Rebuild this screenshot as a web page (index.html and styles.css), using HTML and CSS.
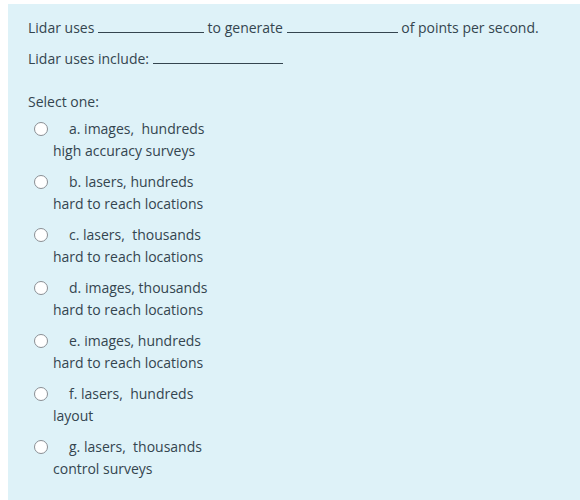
FILE: index.html
```html
<!DOCTYPE html>
<html>
<head>
<meta charset="utf-8">
<link rel="stylesheet" href="styles.css">
</head>
<body>
<div class="formulation">
  <p class="qtext">Lidar uses <span class="blank b1"></span> to generate <span class="blank b2"></span> of points per second.</p>
  <p class="qtext">Lidar uses include: <span class="blank b3"></span></p>
  <div class="ablock">
    <div class="prompt">Select one:</div>
    <div class="answer">
      <div class="opt"><div class="l1"><span class="radio"></span><span class="lbl">a. images,&nbsp; hundreds</span></div><div class="l2">high accuracy surveys</div></div>
      <div class="opt"><div class="l1"><span class="radio"></span><span class="lbl">b. lasers, hundreds</span></div><div class="l2">hard to reach locations</div></div>
      <div class="opt"><div class="l1"><span class="radio"></span><span class="lbl">c. lasers,&nbsp; thousands</span></div><div class="l2">hard to reach locations</div></div>
      <div class="opt"><div class="l1"><span class="radio"></span><span class="lbl">d. images, thousands</span></div><div class="l2">hard to reach locations</div></div>
      <div class="opt"><div class="l1"><span class="radio"></span><span class="lbl">e. images, hundreds</span></div><div class="l2">hard to reach locations</div></div>
      <div class="opt"><div class="l1"><span class="radio"></span><span class="lbl">f. lasers,&nbsp; hundreds</span></div><div class="l2">layout</div></div>
      <div class="opt"><div class="l1"><span class="radio"></span><span class="lbl">g. lasers,&nbsp; thousands</span></div><div class="l2">control surveys</div></div>
    </div>
  </div>
</div>
</body>
</html>
```

FILE: styles.css
```css
html, body {
  margin: 0;
  padding: 0;
  background: #ffffff;
}
body {
  padding: 4px 0 0 8px;
  font-family: "Open Sans", "Noto Sans", sans-serif;
  font-size: 14px;
  line-height: 22px;
  color: #34454f;
}
.formulation {
  box-sizing: border-box;
  background: #def2f8;
  padding: 13px 20px 0 20px;
  height: 496px;
  overflow: hidden;
}
.qtext {
  margin: 0 0 9px 0;
}
.blank {
  display: inline-block;
  border-bottom: 1px solid #34454f;
  height: 15px;
  vertical-align: baseline;
}
.b1 { width: 106px; }
.b2 { width: 111px; }
.b3 { width: 130px; }
.ablock {
  margin-top: 21px;
}
.prompt {
  margin-bottom: 5px;
}
.opt {
  padding-left: 6px;
  margin-bottom: 9px;
}
.l1 {
  display: flex;
  align-items: center;
  height: 22px;
}
.radio {
  width: 12px;
  height: 12px;
  border: 1px solid #8a8f94;
  border-radius: 50%;
  background: #ffffff;
  flex: none;
}
.lbl {
  margin-left: 21px;
}
.l2 {
  padding-left: 19px;
}
```
